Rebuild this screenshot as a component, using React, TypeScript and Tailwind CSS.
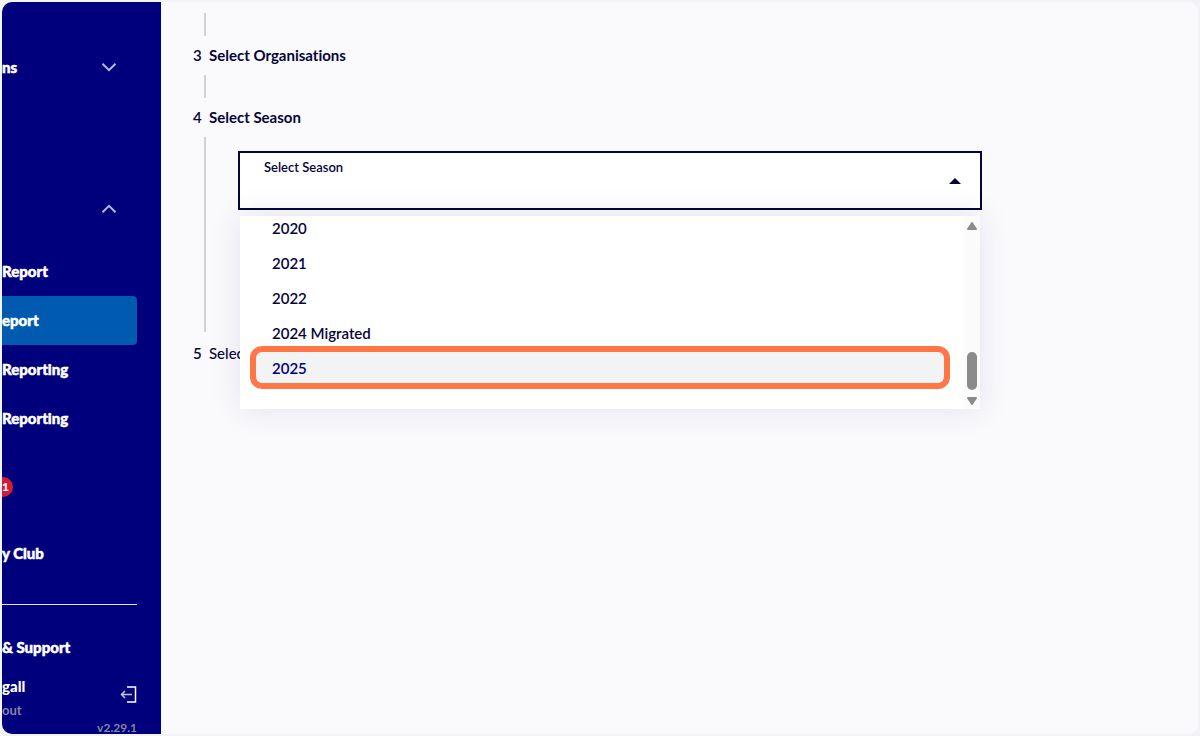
import type { ReactNode } from "react";

const seasons = ["2020", "2021", "2022", "2024 Migrated", "2025"];

function Chevron({ up = false }: { up?: boolean }) {
  return (
    <svg width="16" height="10" viewBox="0 0 16 10" fill="none" stroke="#b9b9de" strokeWidth="2">
      <path d={up ? "M1.5 8.2 8 1.8l6.5 6.4" : "M1.5 1.8 8 8.2l6.5-6.4"} />
    </svg>
  );
}

function LogoutIcon() {
  return (
    <svg width="17" height="17" viewBox="0 0 17 17" fill="none" strokeWidth="1.5">
      <path d="M7 1h8.5v15H7" stroke="#fff" />
      <path d="M12 8.5H1.5M5 5 1.500 8.500 5 12" stroke="#c5c5e6" />
    </svg>
  );
}

function NavLink({ children, active = false }: { children: ReactNode; active?: boolean }) {
  return (
    <a
      href="#"
      className={
        active
          ? "flex h-[49px] items-center rounded-r-sm bg-[#005ab0] pb-0.5 text-white [-webkit-text-stroke:0.5px_white]"
          : "flex h-[49px] items-center pb-0.5 text-white [-webkit-text-stroke:0.5px_white]"
      }
    >
      {children}
    </a>
  );
}

function Sidebar() {
  return (
    <nav className="flex w-[159px] shrink-0 flex-col overflow-hidden whitespace-nowrap bg-[#00007c] pr-6 pt-10 text-[15px] font-black leading-5 text-white">
      <button type="button" className="flex h-[49px] shrink-0 items-center justify-between pr-5">
        <span className="[-webkit-text-stroke:0.5px_white]">ns</span>
        <Chevron />
      </button>
      <button
        type="button"
        aria-label="Reports"
        className="mt-[93px] flex h-[49px] shrink-0 items-center justify-end pr-5"
      >
        <Chevron up />
      </button>
      <div className="mt-3.5 flex flex-col">
        <NavLink>Report</NavLink>
        <NavLink active>eport</NavLink>
        <NavLink>Reporting</NavLink>
        <NavLink>Reporting</NavLink>
      </div>
      <a href="#" className="mt-5 flex h-12 shrink-0 items-center">
        <span className="flex h-5 w-[11px] items-center rounded-r-full bg-[#d81b35] text-xs">1</span>
      </a>
      <div className="mt-[18px]">
        <NavLink>y Club</NavLink>
      </div>
      <hr className="mt-[26px] border-[#e6e6f2]" />
      <div className="mt-[18px]">
        <NavLink>&amp; Support</NavLink>
      </div>
      <div className="mt-1 flex shrink-0 items-center justify-between">
        <div className="flex flex-col gap-1">
          <span>gall</span>
          <span className="text-[13px] font-bold text-[#8585a3]">out</span>
        </div>
        <button type="button" aria-label="Log out" className="mb-2">
          <LogoutIcon />
        </button>
      </div>
      <span className="self-end text-xs font-bold leading-4 text-[#8585a3]">v2.29.1</span>
    </nav>
  );
}

function Step({ number, title, pending = false }: { number: number; title: string; pending?: boolean }) {
  return (
    <div className="flex h-[39px] items-center gap-2 pb-0.5 text-[15px] leading-5">
      <span className="w-2 font-semibold">{number}</span>
      <h2 className={pending ? "font-medium" : "font-bold"}>{title}</h2>
    </div>
  );
}

function SeasonMenu() {
  return (
    <div className="absolute inset-x-0.5 top-[65px] flex h-[193px] bg-white shadow-[0_0_28px_rgba(60,60,150,0.13)]">
      <ul
        role="listbox"
        aria-label="Select Season"
        className="flex flex-1 flex-col justify-end overflow-hidden pb-[23px] text-[15px] font-semibold"
      >
        {seasons.map((season) =>
          season === "2025" ? (
            <li key={season} role="option" aria-selected="true" className="relative flex h-[35px] shrink-0 items-center px-8 text-[#00007c]">
              <span className="absolute -bottom-[3px] -top-[5px] left-2.5 right-3.5 rounded-xl border-6 border-[#ff7745] bg-[#f2f3f5]" />
              <span className="relative">{season}</span>
            </li>
          ) : (
            <li key={season} role="option" aria-selected="false" className="flex h-[35px] shrink-0 items-center px-8">
              {season}
            </li>
          ),
        )}
      </ul>
      <div className="flex w-4 flex-col items-center bg-[#fbfbfb] pb-1 pt-1.5">
        <svg width="10" height="8" viewBox="0 0 10 8" fill="#8b8b8b">
          <path d="M4.2.6a1 1 0 0 1 1.6 0l4 6q.6 1.4-.8 1.4H1Q-.4 8 .2 6.600z" />
        </svg>
        <div className="mb-[7px] mt-auto h-[38px] w-2.5 rounded-full bg-[#8b8b8b]" />
        <svg width="10" height="8" viewBox="0 0 10 8" fill="#8b8b8b">
          <path d="M4.200 7.400a1 1 0 0 0 1.600 0l4-6Q10.400 0 9 0H1Q-.4 0 .2 1.400z" />
        </svg>
      </div>
    </div>
  );
}

function SeasonField() {
  return (
    <div className="relative">
      <div className="flex h-[59px] items-center border-2 border-[#05053a] bg-white pl-6 pr-[19px]">
        <div className="flex flex-1 flex-col pb-1">
          <label htmlFor="season" className="text-[13px] font-semibold leading-5">
            Select Season
          </label>
          <select id="season" defaultValue="" className="h-6 w-full appearance-none bg-transparent outline-none">
            <option value="" />
            {seasons.map((season) => (
              <option key={season}>{season}</option>
            ))}
          </select>
        </div>
        <svg width="12" height="6" viewBox="0 0 12 6" fill="#05053a">
          <path d="M0 6 6 0l6 6z" />
        </svg>
      </div>
      <SeasonMenu />
    </div>
  );
}

export default function App() {
  return (
    <div className="h-screen overflow-hidden bg-[#f3f3f7] p-0.5 font-['Lato',sans-serif] [font-variant-ligatures:none]">
      <div className="flex h-full overflow-hidden rounded-[10px] bg-[#fafafc]">
        <Sidebar />
        <main className="flex-1 pl-8 pt-[11px] text-[#05053a]">
          <div className="ml-[11px] h-[23px] border-l-2 border-[#d2d2d4]" />
          <Step number={3} title="Select Organisations" />
          <div className="ml-[11px] h-[23px] border-l-2 border-[#d2d2d4]" />
          <Step number={4} title="Select Season" />
          <div className="ml-[11px] h-[195px] border-l-2 border-[#d2d2d4] pl-8 pr-[216px] pt-3.5">
            <SeasonField />
          </div>
          <div className="pt-0.5">
            <Step number={5} title="Select Report" pending />
          </div>
        </main>
      </div>
    </div>
  );
}
